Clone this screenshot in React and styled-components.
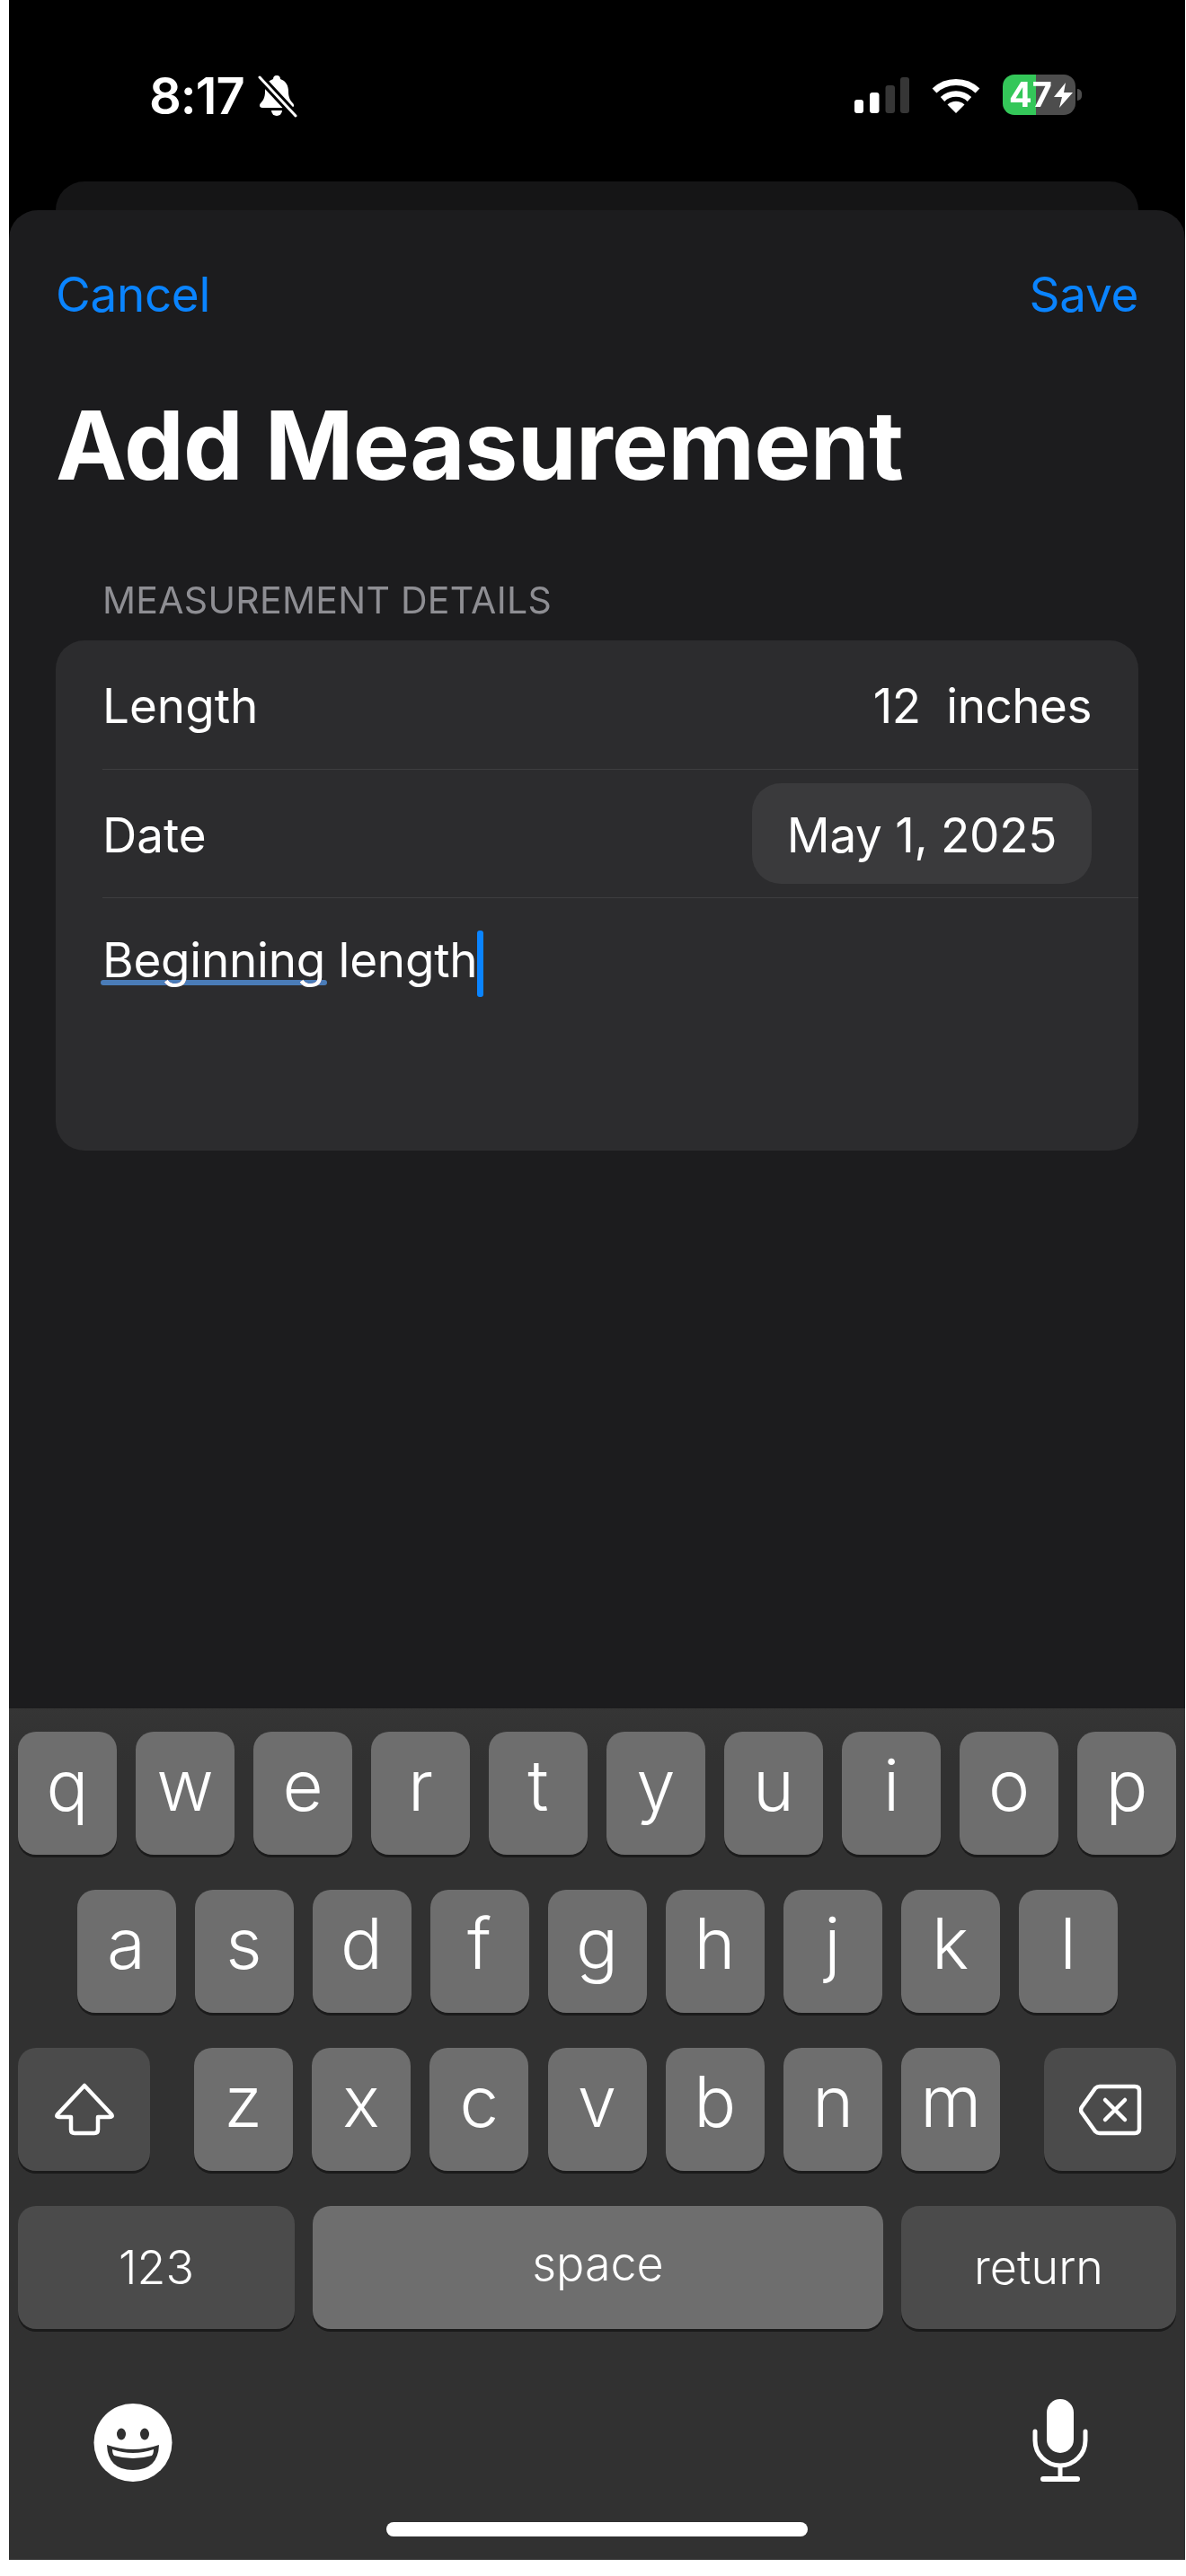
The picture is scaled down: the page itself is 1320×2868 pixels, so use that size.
import styled, { createGlobalStyle } from "styled-components";

const GlobalStyle = createGlobalStyle`
  html, body {
    margin: 0;
    padding: 0;
    background: #fff;
  }
  * {
    box-sizing: border-box;
  }
`;

const Page = styled.div`
  width: 1320px;
  height: 2868px;
  padding: 0 1px 18px 10px;
  background: #fff;
  font-family: Inter, "Liberation Sans", sans-serif;
  color: #fff;
  overflow: hidden;
`;
const Screen = styled.div`
  height: 100%;
  display: flex;
  flex-direction: column;
  background: #000;
`;

// ---------- status bar ----------
const StatusBar = styled.div`
  height: 202px;
  flex-shrink: 0;
  display: flex;
  justify-content: space-between;
  align-items: flex-start;
  padding: 83px 122px 0 156px;
`;
const TimeBox = styled.div`
  display: flex;
  align-items: flex-start;
  gap: 15px;
`;
const Time = styled.div`
  font-size: 56px;
  font-weight: 600;
  line-height: 48px;
  letter-spacing: -1px;
`;
const StatusIcons = styled.div`
  display: flex;
  align-items: center;
  gap: 25px;
`;
const Battery = styled.div`
  position: relative;
  width: 81px;
  height: 45px;
  border-radius: 13px;
  background: linear-gradient(90deg, #34c759 46%, #4d4d4d 46%);
  display: flex;
  align-items: center;
  padding-left: 7px;
  gap: 2px;
  font-size: 38px;
  font-weight: 700;
  line-height: 45px;
  &::after {
    content: "";
    position: absolute;
    right: -7px;
    top: 16px;
    width: 5px;
    height: 13px;
    border-radius: 0 6px 6px 0;
    background: #4d4d4d;
  }
`;

const BackCard = styled.div`
  height: 32px;
  flex-shrink: 0;
  margin: 0 52px;
  border-radius: 32px 32px 0 0;
  background: #151516;
`;

// ---------- sheet ----------
const Sheet = styled.div`
  flex: 1;
  display: flex;
  flex-direction: column;
  background: #1c1c1e;
  border-radius: 32px 32px 0 0;
  overflow: hidden;
`;
const NavRow = styled.div`
  display: flex;
  justify-content: space-between;
  padding: 64px 52px 0;
`;
const NavButton = styled.div`
  font-size: 53px;
  line-height: 60px;
  letter-spacing: -0.3px;
  color: #0a84ff;
`;
const Title = styled.h1`
  margin: 78px 0 0;
  padding: 0 52px;
  font-size: 106px;
  font-weight: 700;
  line-height: 120px;
  letter-spacing: -0.7px;
`;
const SectionLabel = styled.div`
  margin-top: 89px;
  padding: 0 104px;
  font-size: 41px;
  line-height: 46px;
  letter-spacing: 0.3px;
  color: #8e8e93;
`;
const Card = styled.div`
  margin: 22px 52px 0;
  height: 568px;
  border-radius: 32px;
  background: #2c2c2e;
  display: flex;
  flex-direction: column;
`;
const Row = styled.div`
  height: ${(props) => props.$h}px;
  flex-shrink: 0;
  margin-left: 52px;
  padding-right: 52px;
  display: flex;
  justify-content: space-between;
  align-items: center;
  border-bottom: 1.5px solid #3e3e40;
  font-size: 53px;
`;
const RowLabel = styled.span`
  padding-top: 3px;
`;
const Value = styled.span`
  padding-top: 3px;
  letter-spacing: -0.5px;
  white-space: pre;
`;
const DatePill = styled.div`
  width: 378px;
  height: 112px;
  padding-top: 3px;
  border-radius: 32px;
  background: #3a3a3c;
  display: flex;
  align-items: center;
  justify-content: center;
  letter-spacing: -0.3px;
`;
const NoteRow = styled.div`
  margin: 36px 0 0 52px;
  height: 74px;
  display: flex;
  align-items: center;
  font-size: 53px;
  letter-spacing: -0.25px;
`;
const Note = styled.span`
  margin-bottom: 8px;
  white-space: pre;
`;
const Marked = styled.span`
  position: relative;
  &::after {
    content: "";
    position: absolute;
    left: -2px;
    right: -2px;
    bottom: 4px;
    height: 6px;
    border-radius: 3px;
    background: #4a7cb8;
    mix-blend-mode: lighten;
  }
`;
const Caret = styled.span`
  width: 7px;
  height: 74px;
  border-radius: 3px;
  background: #0a84ff;
`;

// ---------- keyboard ----------
const Keyboard = styled.div`
  margin-top: auto;
  height: 948px;
  padding: 26px 10px 26px;
  display: flex;
  flex-direction: column;
  align-items: stretch;
  background: linear-gradient(180deg, #353535 0, #313131 60px);
`;
const KeyRow = styled.div`
  height: 137px;
  margin-bottom: 39px;
  flex-shrink: 0;
  display: flex;
  justify-content: ${(props) => props.$justify || "space-between"};
  gap: ${(props) => props.$gap || 21}px;
`;
const Key = styled.div`
  width: ${(props) => props.$w || 110}px;
  height: 137px;
  flex-shrink: 0;
  border-radius: 20px;
  background: ${(props) => (props.$dark ? "#4b4b4b" : "#6e6e6e")};
  box-shadow: 0 3px 0 #1b1b1b;
  display: flex;
  align-items: center;
  justify-content: center;
  padding-bottom: ${(props) => props.$lift ?? 17}px;
  font-size: ${(props) => props.$size || 78}px;
  font-weight: 300;
  line-height: 1;
`;
const Letters = styled.div`
  display: flex;
  gap: 21.3px;
`;
const BottomRow = styled.div`
  margin-top: 39px;
  height: 92px;
  flex-shrink: 0;
  display: flex;
  justify-content: space-between;
  align-items: flex-end;
  padding: 0 98px 0 84px;
`;
const HomeIndicator = styled.div`
  width: 469px;
  height: 16px;
  flex-shrink: 0;
  margin: 45px auto 0;
  border-radius: 8px;
  background: #fff;
`;

// ---------- icons ----------
const BellSlash = () => (
  <svg width="44" height="48" viewBox="0 0 44 48">
    <path
      fill="#fff"
      d="M21 1C24 1 25 3 25 5C31 7 34 12 34 19C34 25 36 29 39 32C41 34 40 37 37 37H5C2 37 1 34 3 32C6 29 8 25 8 19C8 12 11 7 17 5C17 3 18 1 21 1Z"
    />
    <path fill="#fff" d="M15 40H27A6 6 0 0 1 15 40Z" />
    <path d="M2 3L42 46" stroke="#000" strokeWidth="9" />
    <path d="M2 3L42 46" stroke="#fff" strokeWidth="3" strokeLinecap="round" />
  </svg>
);

const Signal = () => (
  <svg width="61" height="40" viewBox="0 0 61 40">
    <rect x="0" y="25" width="10" height="15" rx="3" fill="#fff" />
    <rect x="17" y="17" width="10.5" height="23" rx="3" fill="#fff" />
    <rect x="34.5" y="9" width="10.5" height="31" rx="3" fill="#363636" />
    <rect x="51" y="0" width="10" height="40" rx="3" fill="#363636" />
  </svg>
);

const Wifi = () => (
  <svg width="54" height="40" viewBox="0 0 54 40">
    <path d="M3 15A35 35 0 0 1 51 15" fill="none" stroke="#fff" strokeWidth="7" />
    <path d="M12 24.5A22 22 0 0 1 42 24.5" fill="none" stroke="#fff" strokeWidth="6.5" />
    <path d="M27 40L17.5 30.5A14 14 0 0 1 36.5 30.5Z" fill="#fff" />
  </svg>
);

const Bolt = () => (
  <svg width="21" height="28" viewBox="0 0 21 28">
    <path d="M13 0L0 16H9L6 28L21 11H11Z" fill="#fff" />
  </svg>
);

const ShiftIcon = () => (
  <svg width="68" height="59" viewBox="0 0 68 59">
    <path
      d="M34 3L4 35Q2 38 6 38H19V52Q19 56 23 56H45Q49 56 49 52V38H62Q66 38 64 35Z"
      fill="none"
      stroke="#fff"
      strokeWidth="4.5"
      strokeLinejoin="round"
    />
  </svg>
);

const BackspaceIcon = () => (
  <svg width="70" height="58" viewBox="0 0 70 58">
    <path
      d="M23 3H62Q67 3 67 8V50Q67 55 62 55H23Q20 55 18 53L3 32Q1 29 3 26L18 5Q20 3 23 3Z"
      fill="none"
      stroke="#fff"
      strokeWidth="4.5"
      strokeLinejoin="round"
    />
    <path
      d="M29 18L51 40M51 18L29 40"
      stroke="#fff"
      strokeWidth="4.5"
      strokeLinecap="round"
    />
  </svg>
);

const EmojiIcon = () => (
  <svg width="88" height="87" viewBox="0 0 88 87">
    <circle cx="44" cy="43.5" r="43.5" fill="#fff" />
    <ellipse cx="31" cy="34" rx="5" ry="6.5" fill="#313131" />
    <ellipse cx="57" cy="34" rx="5" ry="6.5" fill="#313131" />
    <path d="M15 46Q44 56 73 46Q72 74 44 74Q16 74 15 46Z" fill="#313131" />
    <path d="M21 51Q44 59 67 51Q67 56 65 58Q44 64 23 58Q21 56 21 51Z" fill="#fff" />
  </svg>
);

const MicIcon = () => (
  <svg width="62" height="92" viewBox="0 0 62 92">
    <rect x="16" y="0" width="30" height="60" rx="15" fill="#fff" />
    <path d="M3 36V46A28 28 0 0 0 59 46V36" fill="none" stroke="#fff" strokeWidth="5" strokeLinecap="round" />
    <path d="M31 74V88" stroke="#fff" strokeWidth="5" />
    <path d="M12 89H50" stroke="#fff" strokeWidth="6" strokeLinecap="round" />
  </svg>
);

const rowOne = "qwertyuiop".split("");
const rowTwo = "asdfghjkl".split("");
const rowThree = "zxcvbnm".split("");

const App = () => {
  return (
    <Page>
      <GlobalStyle />
      <Screen>
        <StatusBar>
          <TimeBox>
            <Time>8:17</Time>
            <BellSlash />
          </TimeBox>
          <StatusIcons>
            <Signal />
            <Wifi />
            <Battery>
              <span>47</span>
              <Bolt />
            </Battery>
          </StatusIcons>
        </StatusBar>
        <BackCard />
        <Sheet>
          <NavRow>
            <NavButton>Cancel</NavButton>
            <NavButton>Save</NavButton>
          </NavRow>
          <Title>Add Measurement</Title>
          <SectionLabel>MEASUREMENT DETAILS</SectionLabel>
          <Card>
            <Row $h={144}>
              <RowLabel>Length</RowLabel>
              <Value>12  inches</Value>
            </Row>
            <Row $h={143}>
              <RowLabel>Date</RowLabel>
              <DatePill>May 1, 2025</DatePill>
            </Row>
            <NoteRow>
              <Note>
                <Marked>Beginning</Marked> length
              </Note>
              <Caret />
            </NoteRow>
          </Card>
          <Keyboard>
            <KeyRow>
              {rowOne.map((k) => (
                <Key key={k}>{k}</Key>
              ))}
            </KeyRow>
            <KeyRow $justify="center">
              {rowTwo.map((k) => (
                <Key key={k}>{k}</Key>
              ))}
            </KeyRow>
            <KeyRow>
              <Key $w={147} $dark $lift={0}>
                <ShiftIcon />
              </Key>
              <Letters>
                {rowThree.map((k) => (
                  <Key key={k}>{k}</Key>
                ))}
              </Letters>
              <Key $w={147} $dark $lift={0}>
                <BackspaceIcon />
              </Key>
            </KeyRow>
            <KeyRow $gap={20}>
              <Key $w={308} $dark $size={52} $lift={0}>
                123
              </Key>
              <Key $w={635} $size={52} $lift={8}>
                space
              </Key>
              <Key $w={306} $dark $size={52} $lift={0}>
                return
              </Key>
            </KeyRow>
            <BottomRow>
              <EmojiIcon />
              <MicIcon />
            </BottomRow>
            <HomeIndicator />
          </Keyboard>
        </Sheet>
      </Screen>
    </Page>
  );
};

export default App;
